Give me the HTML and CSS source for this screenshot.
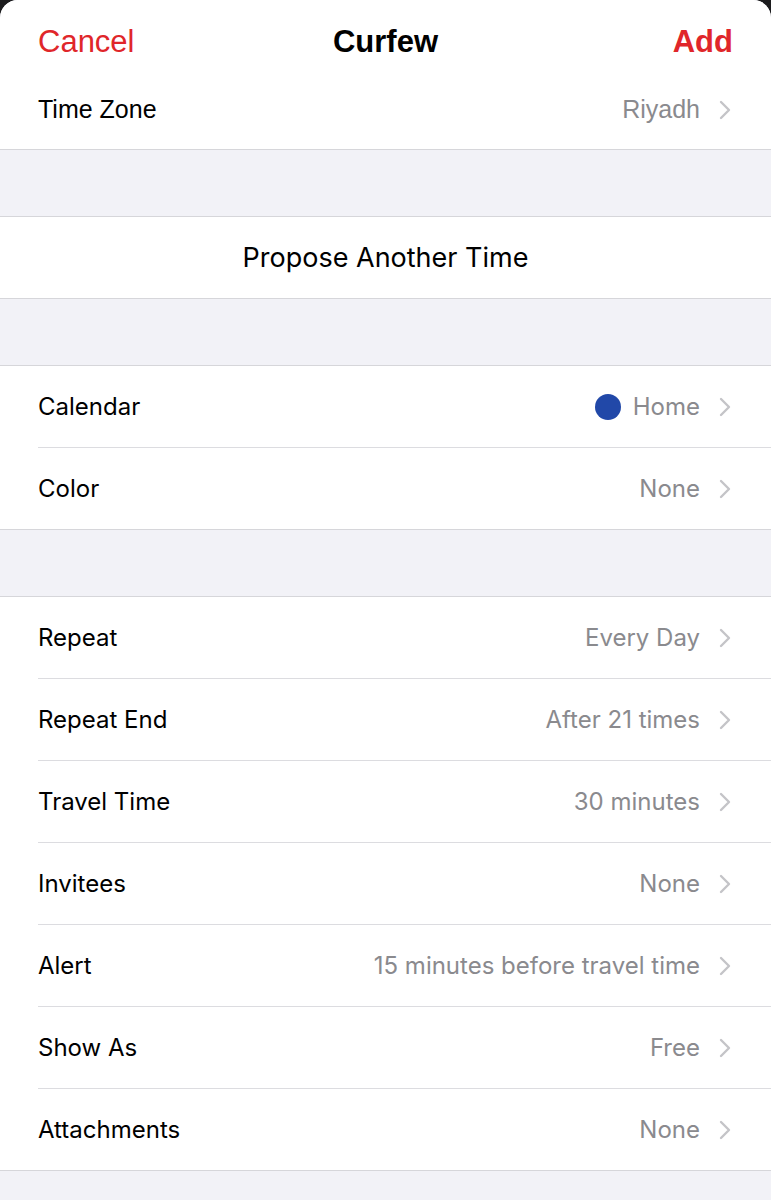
FILE: index.html
```html
<!DOCTYPE html>
<html>
<head>
<title>Curfew</title>
<link rel="stylesheet" href="styles.css">
</head>
<body>

<div class="sheet">
  <div class="header">
    <span class="nav-btn">Cancel</span>
    <span class="title">Curfew</span>
    <span class="nav-btn bold right">Add</span>
  </div>

  <div class="group first">
    <div class="row tz">
      <div class="row-inner">
        <span class="label">Time Zone</span>
        <span class="value">Riyadh</span>
        <svg class="chev" viewBox="0 0 12 20"><path d="M2 2 L10 10 L2 18"/></svg>
      </div>
    </div>
  </div>

  <div class="gap"></div>

  <div class="group">
    <div class="row center">
      <div class="row-inner">
        <span class="propose">Propose Another Time</span>
      </div>
    </div>
  </div>

  <div class="gap"></div>

  <div class="group">
    <div class="row">
      <div class="row-inner">
        <span class="label">Calendar</span>
        <span class="dot"></span>
        <span class="value">Home</span>
        <svg class="chev" viewBox="0 0 12 20"><path d="M2 2 L10 10 L2 18"/></svg>
      </div>
    </div>
    <div class="row">
      <div class="row-inner">
        <span class="label">Color</span>
        <span class="value">None</span>
        <svg class="chev" viewBox="0 0 12 20"><path d="M2 2 L10 10 L2 18"/></svg>
      </div>
    </div>
  </div>

  <div class="gap"></div>

  <div class="group">
    <div class="row">
      <div class="row-inner">
        <span class="label">Repeat</span>
        <span class="value">Every Day</span>
        <svg class="chev" viewBox="0 0 12 20"><path d="M2 2 L10 10 L2 18"/></svg>
      </div>
    </div>
    <div class="row">
      <div class="row-inner">
        <span class="label">Repeat End</span>
        <span class="value">After 21 times</span>
        <svg class="chev" viewBox="0 0 12 20"><path d="M2 2 L10 10 L2 18"/></svg>
      </div>
    </div>
    <div class="row">
      <div class="row-inner">
        <span class="label">Travel Time</span>
        <span class="value">30 minutes</span>
        <svg class="chev" viewBox="0 0 12 20"><path d="M2 2 L10 10 L2 18"/></svg>
      </div>
    </div>
    <div class="row">
      <div class="row-inner">
        <span class="label">Invitees</span>
        <span class="value">None</span>
        <svg class="chev" viewBox="0 0 12 20"><path d="M2 2 L10 10 L2 18"/></svg>
      </div>
    </div>
    <div class="row">
      <div class="row-inner">
        <span class="label">Alert</span>
        <span class="value">15 minutes before travel time</span>
        <svg class="chev" viewBox="0 0 12 20"><path d="M2 2 L10 10 L2 18"/></svg>
      </div>
    </div>
    <div class="row">
      <div class="row-inner">
        <span class="label">Show As</span>
        <span class="value">Free</span>
        <svg class="chev" viewBox="0 0 12 20"><path d="M2 2 L10 10 L2 18"/></svg>
      </div>
    </div>
    <div class="row">
      <div class="row-inner">
        <span class="label">Attachments</span>
        <span class="value">None</span>
        <svg class="chev" viewBox="0 0 12 20"><path d="M2 2 L10 10 L2 18"/></svg>
      </div>
    </div>
  </div>

  <div class="gap"></div>
</div>

</body>
</html>
```

FILE: styles.css
```css
body {
  margin: 0;
  background-color: #1c1c1e;
  font-family: 'Inter', 'Liberation Sans', sans-serif;
  color: #000;
  overflow: hidden;
}

.sheet {
  background-color: #f2f2f7;
  border-radius: 18px 18px 0 0;
  overflow: hidden;
  height: 1200px;
}

.header {
  background-color: #fff;
  height: 60px;
  padding: 12px 38px 0 38px;
  display: grid;
  grid-template-columns: 1fr auto 1fr;
  align-items: center;
  font-family: 'Liberation Sans', sans-serif;
  font-size: 31px;
}

.header .nav-btn {
  color: #e0262a;
}

.header .right {
  text-align: right;
}

.header .bold {
  font-weight: bold;
}

.header .title {
  font-weight: bold;
}

.group {
  background-color: #fff;
  border-top: 1px solid #d6d6da;
  border-bottom: 1px solid #d6d6da;
}

.group.first {
  border-top: none;
}

.gap {
  height: 66px;
}

.row {
  padding-left: 38px;
}

.row-inner {
  height: 81px;
  display: flex;
  align-items: center;
  padding-right: 40px;
  border-bottom: 1px solid #dcdce0;
}

.row:last-child .row-inner {
  border-bottom: none;
}

.row.tz .row-inner {
  height: 75px;
  font-family: 'Liberation Sans', sans-serif;
  padding-bottom: 2px;
}

.label {
  font-size: 24px;
  flex: 1;
}

.row.tz .label,
.row.tz .value {
  font-size: 25px;
}

.value {
  font-size: 24px;
  color: #8a8a8e;
  margin-right: 19px;
}

.chev {
  width: 12px;
  height: 20px;
  fill: none;
  stroke: #c4c4c8;
  stroke-width: 2.4;
  stroke-linecap: round;
  stroke-linejoin: round;
}

.dot {
  width: 26px;
  height: 26px;
  border-radius: 50%;
  background-color: #2148a8;
  margin-right: 12px;
}

.row.center .row-inner {
  justify-content: center;
  padding-right: 38px;
}

.propose {
  font-size: 27px;
}
```
